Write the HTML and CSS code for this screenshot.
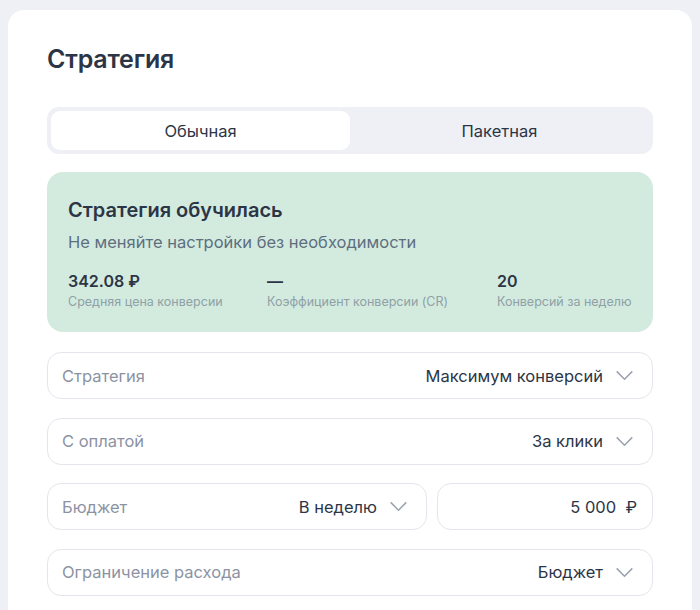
FILE: index.html
```html
<!DOCTYPE html>
<html lang="ru">
<head>
    <meta charset="UTF-8">
    <title>Стратегия</title>
    <link rel="stylesheet" href="styles.css">
</head>
<body>
    <div class="card">
        <h1>Стратегия</h1>

        <div class="tabs">
            <div class="tab active">Обычная</div>
            <div class="tab">Пакетная</div>
        </div>

        <div class="status">
            <div class="status-title">Стратегия обучилась</div>
            <div class="status-sub">Не меняйте настройки без необходимости</div>
            <div class="stats">
                <div class="stat">
                    <div class="stat-value">342.08 ₽</div>
                    <div class="stat-label">Средняя цена конверсии</div>
                </div>
                <div class="stat">
                    <div class="stat-value">—</div>
                    <div class="stat-label">Коэффициент конверсии (CR)</div>
                </div>
                <div class="stat">
                    <div class="stat-value">20</div>
                    <div class="stat-label">Конверсий за неделю</div>
                </div>
            </div>
        </div>

        <div class="field">
            <span class="field-label">Стратегия</span>
            <span class="field-value">Максимум конверсий</span>
            <svg class="chevron" viewBox="0 0 20 12"><path d="M1.5 1.5 L10 10 L18.5 1.5"/></svg>
        </div>

        <div class="field">
            <span class="field-label">С оплатой</span>
            <span class="field-value">За клики</span>
            <svg class="chevron" viewBox="0 0 20 12"><path d="M1.5 1.5 L10 10 L18.5 1.5"/></svg>
        </div>

        <div class="field-row">
            <div class="field wide">
                <span class="field-label">Бюджет</span>
                <span class="field-value">В неделю</span>
                <svg class="chevron" viewBox="0 0 20 12"><path d="M1.5 1.5 L10 10 L18.5 1.5"/></svg>
            </div>
            <div class="field amount">
                <span class="field-value">5 000&nbsp; ₽</span>
            </div>
        </div>

        <div class="field last">
            <span class="field-label">Ограничение расхода</span>
            <span class="field-value">Бюджет</span>
            <svg class="chevron" viewBox="0 0 20 12"><path d="M1.5 1.5 L10 10 L18.5 1.5"/></svg>
        </div>
    </div>
</body>
</html>
```

FILE: styles.css
```css
body {
    margin: 0;
    padding: 10px 8px 0 8px;
    background: #eef0f5;
    font-family: Inter, 'Noto Sans', sans-serif;
    color: #2c3546;
    height: 610px;
    box-sizing: border-box;
    overflow: hidden;
}
.card {
    background: #fff;
    border-radius: 16px 16px 0 0;
    padding: 31px 39px 0 39px;
    height: 600px;
    box-sizing: border-box;
}
h1 {
    margin: 0 0 30px 0;
    font-size: 25px;
    font-weight: 600;
    letter-spacing: -0.2px;
    color: #2c3546;
    line-height: 36px;
}
.tabs {
    display: flex;
    background: #eef0f5;
    border-radius: 12px;
    padding: 4px;
    height: 47px;
    box-sizing: border-box;
    margin-bottom: 18px;
}
.tab {
    flex: 1 1 0;
    display: flex;
    align-items: center;
    justify-content: center;
    font-size: 16.5px;
    border-radius: 9px;
    color: #2c3546;
}
.tab.active {
    background: #fff;
}
.status {
    background: #d3ebdf;
    border-radius: 16px;
    padding: 25px 21px 0 21px;
    height: 160px;
    box-sizing: border-box;
    margin-bottom: 20px;
}
.status-title {
    font-size: 20px;
    font-weight: 600;
    line-height: 26px;
    color: #2c3546;
}
.status-sub {
    font-size: 16.5px;
    color: #5e6e7e;
    line-height: 22px;
    margin-top: 8px;
}
.stats {
    display: flex;
    margin-top: 18px;
}
.stat:nth-child(1) { width: 199px; }
.stat:nth-child(2) { width: 230px; }
.stat-value {
    font-size: 16px;
    font-weight: 600;
    line-height: 20px;
    color: #2c3546;
}
.stat-label {
    font-size: 12.5px;
    color: #8fa0a6;
    line-height: 18px;
    margin-top: 2px;
}
.field {
    display: flex;
    align-items: center;
    height: 47px;
    box-sizing: border-box;
    border: 1px solid #e3e6ec;
    border-radius: 14px;
    padding: 0 18px 0 14px;
    margin-bottom: 18.5px;
    font-size: 16.5px;
}
.field.last {
    margin-bottom: 0;
}
.field-label {
    color: #8b93a3;
    flex: 1;
}
.field-value {
    color: #2c3546;
}
.chevron {
    width: 19px;
    height: 11px;
    margin-left: 12px;
    fill: none;
    stroke: #9aa1ae;
    stroke-width: 1.6;
}
.field-row {
    display: flex;
    gap: 10px;
}
.field.wide {
    width: 380px;
}
.field.amount {
    flex: 1;
    justify-content: flex-end;
    padding-right: 15px;
}
```
